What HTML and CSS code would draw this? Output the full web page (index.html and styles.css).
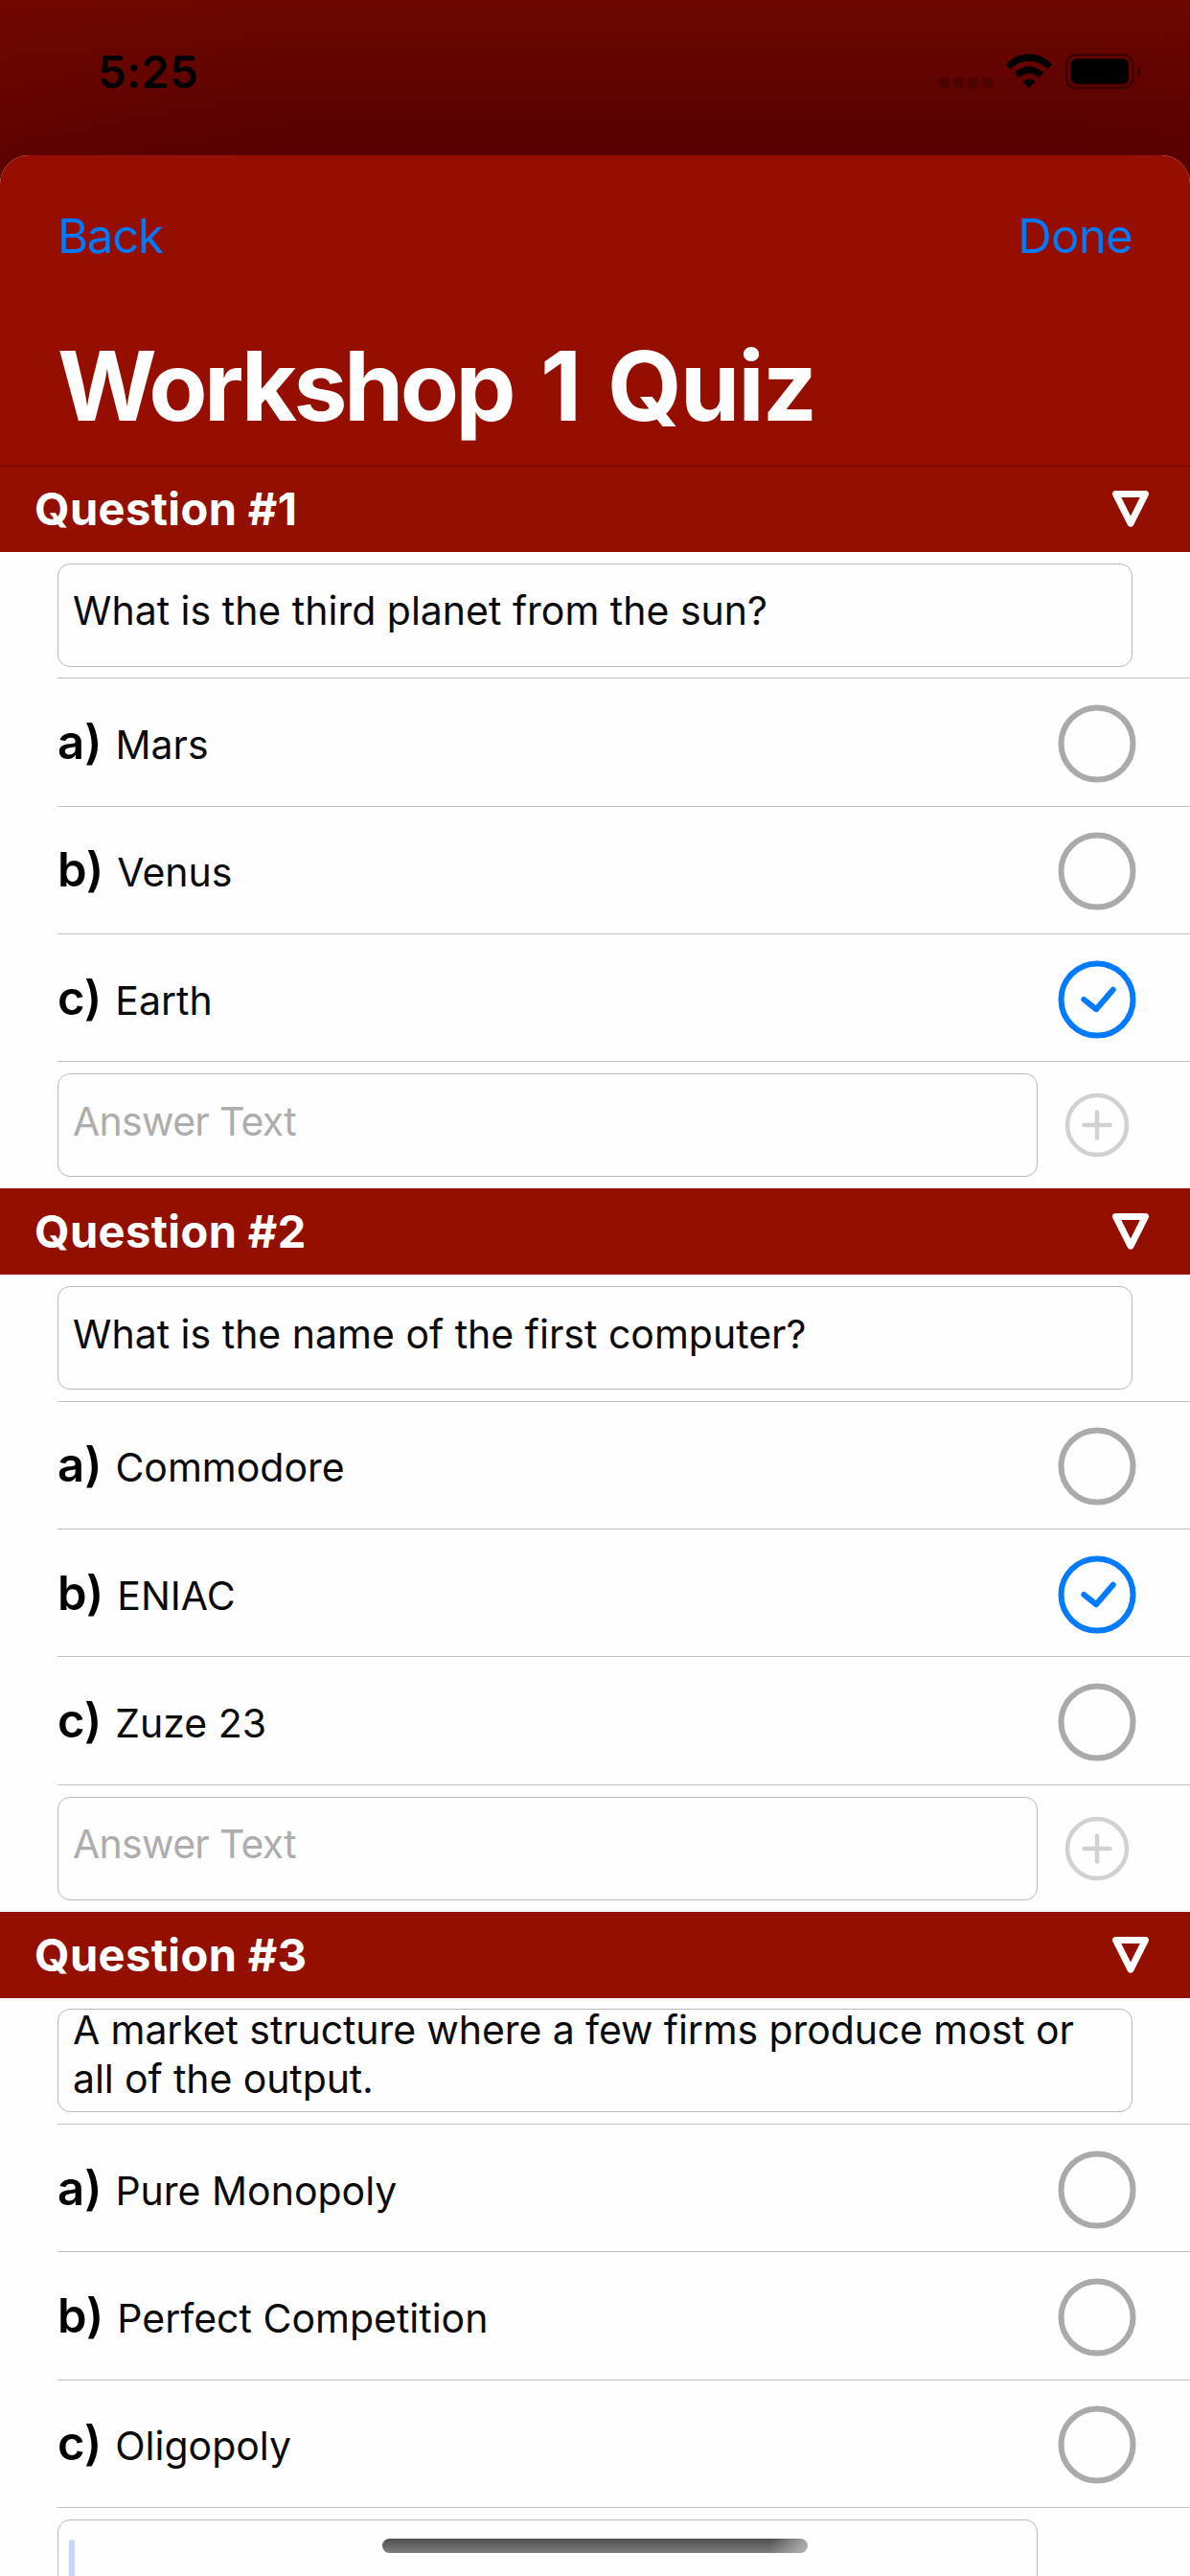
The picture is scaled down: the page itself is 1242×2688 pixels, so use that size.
FILE: index.html
```html
<!DOCTYPE html>
<html lang="en">
<head>
<meta charset="utf-8">
<title>Workshop 1 Quiz</title>
<link rel="stylesheet" href="styles.css">
</head>
<body>
<svg class="defs" aria-hidden="true">
  <symbol id="triangle" viewBox="0 0 40 40"><path d="M4.5 4.4H35.500L20 35.200Z" fill="none" stroke="#fff" stroke-width="7" stroke-linejoin="round"/></symbol>
  <symbol id="empty" viewBox="0 0 82 82"><circle cx="41" cy="41" r="37.500" fill="none" stroke="#aaa" stroke-width="6"/></symbol>
  <symbol id="checked" viewBox="0 0 82 82"><g fill="none" stroke="#007aff" stroke-width="6" stroke-linecap="round" stroke-linejoin="round"><circle cx="41" cy="41" r="37.500"/><path d="M27.300 41L40 51.200L57.700 30.800"/></g></symbol>
  <symbol id="plus" viewBox="0 0 68 68"><g fill="none" stroke="#d1d1d1" stroke-width="4.500" stroke-linecap="round"><circle cx="34" cy="34" r="31"/><path d="M20.500 34H47.500M34 20.500V47.500"/></g></symbol>
</svg>
<div class="screen">
  <div class="status">
    <span class="time">5:25</span>
    <div class="indicators">
      <svg width="56" height="12" viewBox="0 0 56 12"><g fill="#4c0400"><rect width="11" height="11" rx="4"/><rect x="15" width="11" height="11" rx="4"/><rect x="30" width="11" height="11" rx="4"/><rect x="45" width="11" height="11" rx="4"/></g></svg>
      <svg class="wifi" width="48" height="37" viewBox="0 0 48 37"><path d="M0 11.500C13-3.500 35-3.500 48 11.500L43.500 16C32.500 5 15.500 5 4.500 16Z"/><path d="M9 20C17.500 11 30.500 11 39 20L34.300 25C28 19 20 19 13.700 25Z"/><path d="M17.300 29Q24 23.500 30.700 29L24 36Z"/></svg>
      <svg class="battery" width="80" height="37" viewBox="0 0 80 37"><rect x="1.250" y="1.250" width="69" height="34.500" rx="10" fill="none" stroke="#3c0200" stroke-width="2.500"/><rect x="5.500" y="5.300" width="60.500" height="26.500" rx="6"/><path d="M75 12.500Q79 14.500 79 18.500T75 24.500Z" fill="#3c0200"/></svg>
    </div>
  </div>
  <main class="sheet">
    <header class="nav">
      <div class="actions"><span class="back">Back</span><span class="done">Done</span></div>
      <h1><span>Workshop</span> 1 Quiz</h1>
    </header>

    <section>
      <h2 class="first"><span>Question #1</span><svg width="40" height="40"><use href="#triangle"/></svg></h2>
      <div class="row prompt"><div class="field"><p>What is the third planet from the sun?</p></div></div>
      <div class="row answer"><div><b>a)</b><span>Mars</span></div><svg width="82" height="82"><use href="#empty"/></svg></div>
      <div class="row answer"><div><b>b)</b><span>Venus</span></div><svg width="82" height="82"><use href="#empty"/></svg></div>
      <div class="row answer"><div><b>c)</b><span>Earth</span></div><svg width="82" height="82"><use href="#checked"/></svg></div>
      <div class="row entry"><div class="field"><p>Answer Text</p></div><svg width="68" height="68"><use href="#plus"/></svg></div>
    </section>

    <section>
      <h2><span>Question #2</span><svg width="40" height="40"><use href="#triangle"/></svg></h2>
      <div class="row prompt"><div class="field"><p>What is the name of the first computer?</p></div></div>
      <div class="row answer"><div><b>a)</b><span>Commodore</span></div><svg width="82" height="82"><use href="#empty"/></svg></div>
      <div class="row answer"><div><b>b)</b><span>ENIAC</span></div><svg width="82" height="82"><use href="#checked"/></svg></div>
      <div class="row answer"><div><b>c)</b><span>Zuze 23</span></div><svg width="82" height="82"><use href="#empty"/></svg></div>
      <div class="row entry"><div class="field"><p>Answer Text</p></div><svg width="68" height="68"><use href="#plus"/></svg></div>
    </section>

    <section>
      <h2><span>Question #3</span><svg width="40" height="40"><use href="#triangle"/></svg></h2>
      <div class="row prompt"><div class="field"><p class="multi">A market structure where a few firms produce most or all of the output.</p></div></div>
      <div class="row answer"><div><b>a)</b><span>Pure Monopoly</span></div><svg width="82" height="82"><use href="#empty"/></svg></div>
      <div class="row answer"><div><b>b)</b><span>Perfect Competition</span></div><svg width="82" height="82"><use href="#empty"/></svg></div>
      <div class="row answer"><div><b>c)</b><span>Oligopoly</span></div><svg width="82" height="82"><use href="#empty"/></svg></div>
      <div class="row entry"><div class="field"><i class="caret"></i></div></div>
    </section>
  </main>
  <div class="home"></div>
</div>
</body>
</html>
```
FILE: styles.css
```css
* { box-sizing: border-box; }
body { margin: 0; font-family: Inter, "Liberation Sans", sans-serif; }
.defs { position: absolute; width: 0; height: 0; }
svg { display: block; flex: none; }

.screen {
  position: relative;
  width: 1242px;
  height: 2688px;
  overflow: hidden;
  background: linear-gradient(90deg, rgba(120, 8, 0, .3), rgba(120, 8, 0, 0) 300px, rgba(120, 8, 0, 0) 1120px, rgba(110, 4, 0, .15)),
    linear-gradient(#6d0800, #540000 162px, #540000);
}

.status {
  display: flex;
  justify-content: space-between;
  align-items: flex-start;
  height: 162px;
  padding: 56px 50px 0 102px;
}
.time { font-size: 47px; font-weight: 600; line-height: 37px; letter-spacing: .4px; }
.indicators { display: flex; align-items: center; }
.indicators svg:first-child { margin-top: 24px; }
.wifi { margin-left: 14px; }
.battery { margin-left: 14px; }

.sheet { border-radius: 30px 30px 0 0; background: #fefefe; overflow: hidden; }
.nav { height: 324px; background: #950e00; }
.actions {
  display: flex;
  justify-content: space-between;
  padding: 55px 60px 0 60px;
  color: #007aff;
  font-size: 49px;
  line-height: 60px;
}
.back { letter-spacing: -1.2px; }
.done { letter-spacing: -.6px; }
h1 {
  margin: 66px 0 0;
  padding-left: 60px;
  color: #fff;
  font-size: 100px;
  font-weight: 700;
  line-height: 120px;
  letter-spacing: -1.8px;
  word-spacing: 7px;
}
h1 span { letter-spacing: -3.5px; }

h2 {
  display: flex;
  justify-content: space-between;
  align-items: center;
  height: 90px;
  margin: 0;
  padding: 0 42px 0 36px;
  background: #931000;
  color: #fff;
  font-size: 47px;
  font-weight: 700;
  line-height: 56px;
  letter-spacing: .4px;
}
.first { box-shadow: inset 0 1px #690c00; }

.row {
  display: flex;
  align-items: center;
  margin-left: 60px;
  color: #0a0a0a;
  font-size: 41px;
}
.prompt { height: 132.200px; padding-right: 60px; border-bottom: 1px solid #c0c0c0; }
.answer {
  justify-content: space-between;
  height: 133.330px;
  padding: 3px 56px 0 0;
  border-bottom: 1px solid #c0c0c0;
}
.answer b { margin-right: 14px; color: #000; font-size: 49px; font-weight: 600; }
.answer div { line-height: 60px; }
.entry { height: 132.250px; padding-right: 64px; gap: 28px; }

.field {
  flex: 1;
  display: flex;
  align-items: center;
  height: 108px;
  padding: 0 17px 8px 15px;
  border: 1px solid #b8b8b8;
  border-radius: 13px;
}
.field p { margin: 0; line-height: 51px; }
.field .multi { margin: -5px 0 0; letter-spacing: -.1px; }
.entry .field { flex: 0 0 1023px; }
.entry p { color: #adadad; letter-spacing: -.7px; }
.caret { width: 6px; height: 60px; margin: 2px 0 0 -4px; border-radius: 3px; background: #c9d5ff; }

.home {
  position: absolute;
  left: 399px;
  top: 2649px;
  width: 444px;
  height: 15px;
  border-radius: 8px;
  background: linear-gradient(100deg, rgba(190, 190, 190, 0) 91%, rgba(190, 190, 190, .85)), linear-gradient(#4f4f4f, #7d7d7d);
}
```
